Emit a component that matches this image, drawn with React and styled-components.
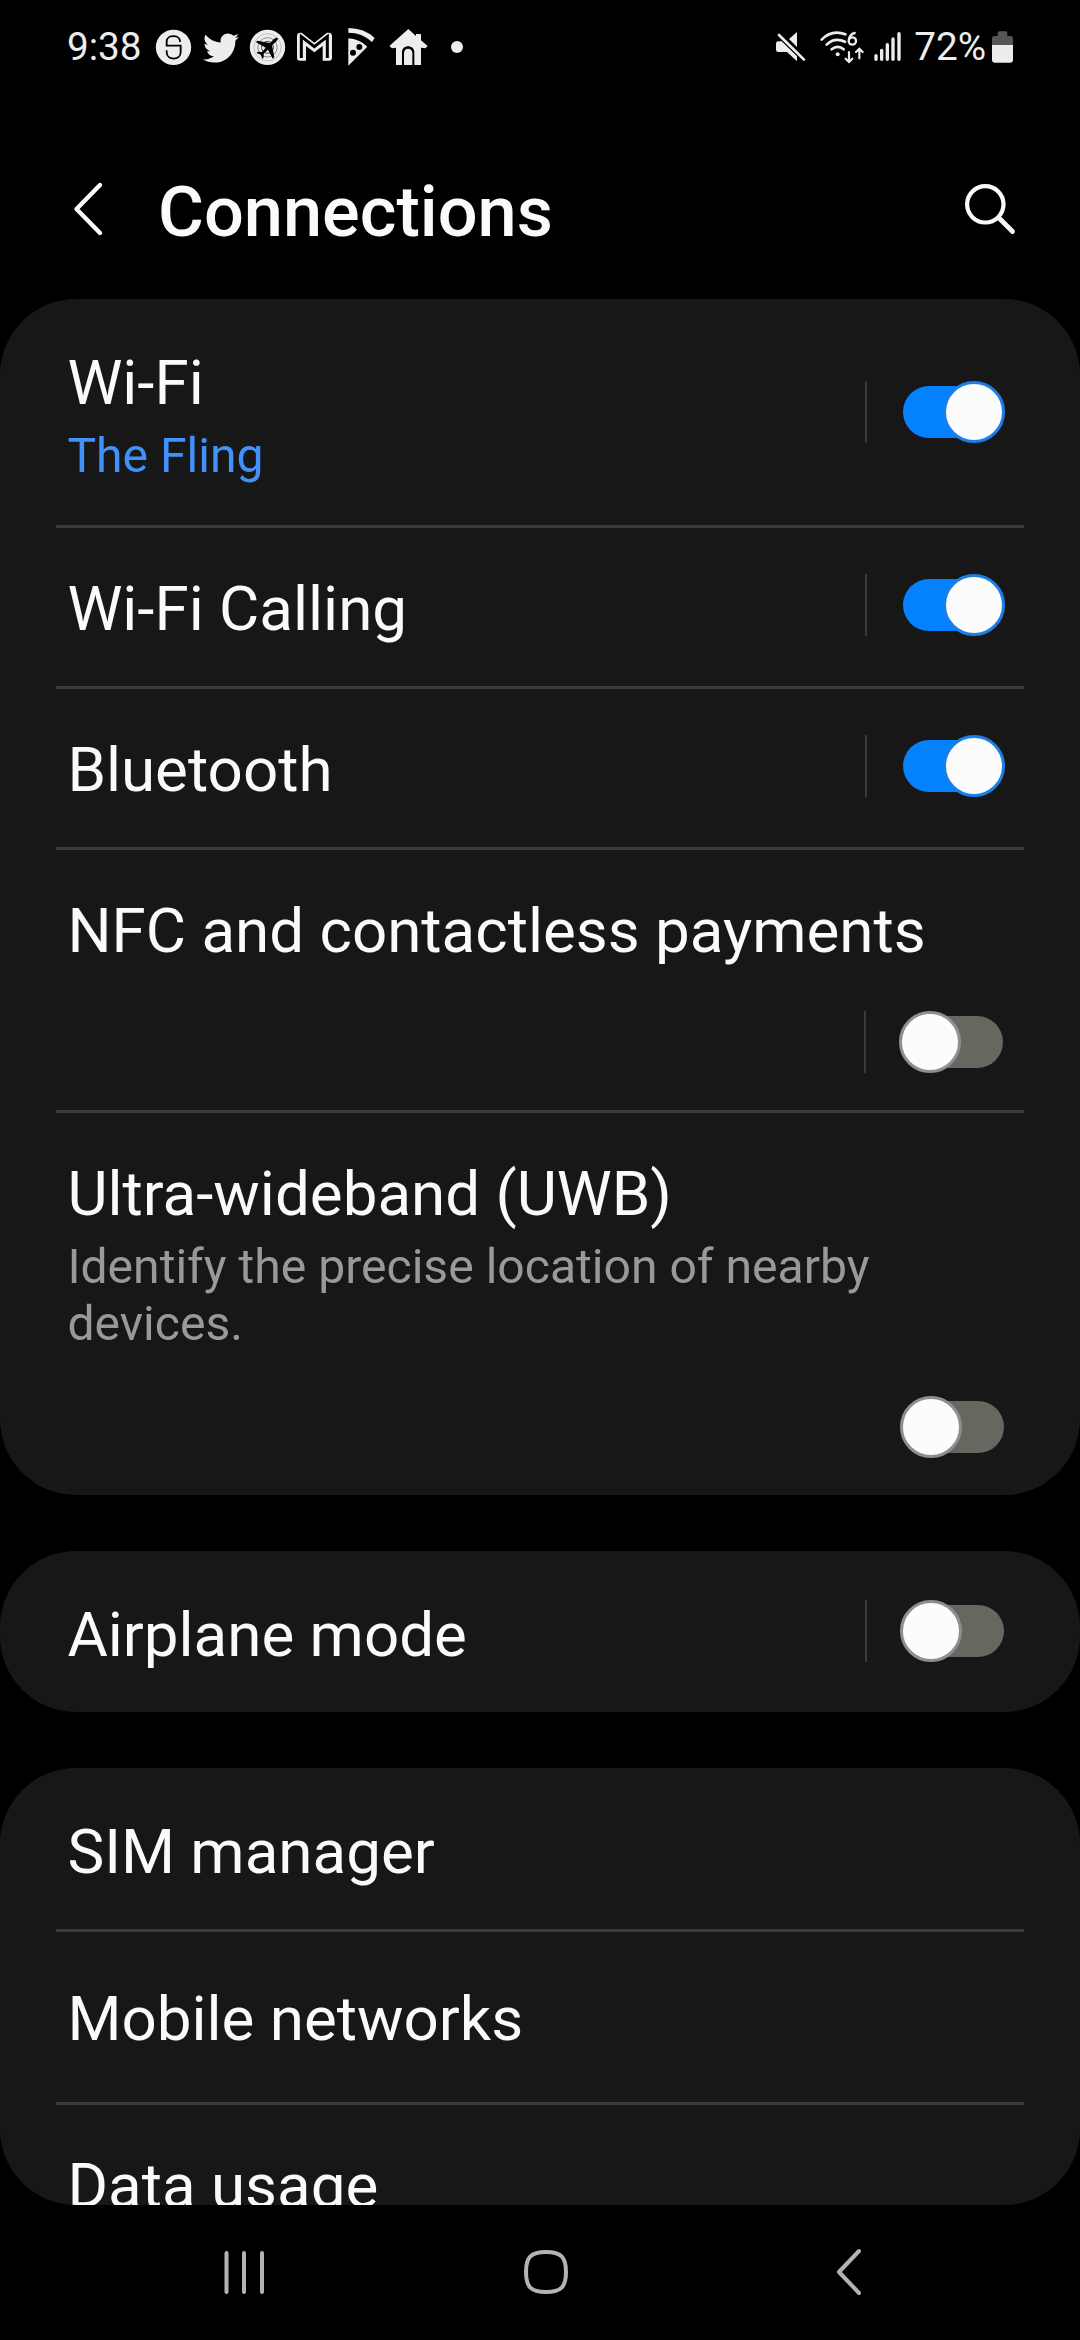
import React from "react";
import styled, { createGlobalStyle } from "styled-components";
import { FaTwitter } from "react-icons/fa";

const GlobalStyle = createGlobalStyle`
  * { box-sizing: border-box; }
  body { margin: 0; background: #000; }
`;

const Screen = styled.div`
  display: flex;
  flex-direction: column;
  width: 1080px;
  height: 2340px;
  overflow: hidden;
  background: #000;
  color: #fafafa;
  font-family: Roboto, "Liberation Sans", sans-serif;
`;

const StatusBar = styled.header`
  display: flex;
  justify-content: space-between;
  height: 96px;
  padding: 27px 66px 0 67px;
  color: #ededed;
`;

const StatusGroup = styled.div`
  display: flex;
  align-items: center;
  height: 40px;
`;

const StatusText = styled.span`
  width: ${(p) => p.$width}px;
  margin-left: ${(p) => p.$gap || 0}px;
  font-size: 38.7px;
  line-height: 40px;
  white-space: nowrap;
`;

const Glyph = styled.svg`
  flex: none;
  height: 40px;
  margin-left: ${(p) => p.$gap || 0}px;
`;

const Bird = styled(FaTwitter)`
  flex: none;
  width: 36px;
  height: 36px;
  margin: 1px 0 0 11px;
`;

const TitleBar = styled.div`
  display: flex;
  align-items: flex-start;
  height: 203px;
  padding: 84px 62px 0 71px;
`;

const Title = styled.h1`
  flex: 1;
  margin: -10px 0 0 52px;
  font-size: 70.3px;
  line-height: 84px;
  font-weight: 500;
`;

const Content = styled.main`
  display: flex;
  flex-direction: column;
  gap: 56px;
  height: 1906px;
  overflow: hidden;
`;

const Card = styled.section`
  flex: none;
  height: ${(p) => p.$height}px;
  overflow: hidden;
  border-radius: 76px;
  background: #171717;
`;

const Divider = styled.div`
  height: 3px;
  margin: 0 56px -3px;
  background: #3a3a3a;
`;

const Row = styled.div`
  display: flex;
  flex-direction: ${(p) => (p.$stacked ? "column" : "row")};
  align-items: ${(p) => (p.$stacked ? "stretch" : "center")};
  justify-content: space-between;
  height: ${(p) => p.$height}px;
  padding: 0 75px ${(p) => (p.$stacked ? 36 : 0)}px 67.4px;
`;

const Texts = styled.div`
  flex: 1;
  align-self: stretch;
  padding-top: ${(p) => p.$top || 48}px;
`;

const Label = styled.div`
  font-size: 61.9px;
  line-height: 73px;
  white-space: nowrap;
`;

const Detail = styled.div`
  max-width: 850px;
  margin-top: 7px;
  font-size: 48.1px;
  line-height: 57px;
  color: ${(p) => (p.$accent ? "#4291fa" : "#999999")};
`;

const Control = styled.div`
  display: flex;
  align-items: flex-start;
  justify-content: flex-end;
  gap: 33px;
  height: 63px;
  margin-right: ${(p) => (p.$inset ? 1 : 0)}px;
`;

const Separator = styled.div`
  width: 2px;
  height: 62px;
  background: #3a3a3a;
`;

const Switch = styled.div`
  position: relative;
  display: flex;
  align-items: center;
  width: 105px;
  height: 62px;
`;

const Track = styled.div`
  width: 101px;
  height: 52px;
  margin-left: 3px;
  border-radius: 26px;
  background: ${(p) => (p.$on ? "#0381fe" : "#66675f")};
`;

const Knob = styled.div`
  position: absolute;
  top: 0;
  left: ${(p) => (p.$on ? 43 : 0)}px;
  width: 62px;
  height: 62px;
  border-radius: 50%;
  border: 3px solid ${(p) => (p.$on ? "#1a7fe8" : "#8f8f8f")};
  background: #fcfcfc;
`;

const NavBar = styled.nav`
  display: flex;
  align-items: center;
  justify-content: space-between;
  height: 135px;
  padding: 0 216px 1px 222px;
`;

const NavHome = styled.svg`
  margin-left: -8px;
`;

const SealIcon = () => (
  <Glyph viewBox="315 36 111 120" width="37">
    <circle cx="370.5" cy="97" r="53" fill="currentColor" />
    <path
      d="M390 81V79C390 58 350 58 350 79V92H392V112C392 137 350 137 350 112V106"
      fill="none"
      stroke="#000"
      strokeWidth="5.5"
    />
  </Glyph>
);

const PlaneIcon = () => (
  <Glyph viewBox="597 36 111 120" width="37" $gap={10}>
    <circle cx="652.5" cy="97" r="53" fill="currentColor" />
    <circle cx="652.5" cy="97" r="41" fill="none" stroke="#aaa" strokeWidth="2" />
    <circle cx="652.5" cy="97" r="29" fill="none" stroke="#777" strokeWidth="2.5" />
    <circle cx="652.5" cy="97" r="18" fill="none" stroke="#444" strokeWidth="3" />
    <path
      d="M683 69C679 67 674 70 671 73L660 84L622 77L618 82L647 98L636 111L623 110L620 114L632 119L637 131L641 128L641 116L654 104L668 131L673 127L666 91L678 80C681 77 685 73 683 69Z"
      fill="#000"
    />
  </Glyph>
);

const MailIcon = () => (
  <Glyph viewBox="78 36 111 120" width="37" $gap={10}>
    <path
      d="M81 63Q81 53 91 53H95L133 83L171 53H176Q186 53 186 63V130Q186 137 179 137H158V93L133 112L108 93V137H88Q81 137 81 130Z"
      fill="currentColor"
    />
    <path
      d="M94 129V65L133 95L172 65V129"
      fill="none"
      stroke="#000"
      strokeWidth="9"
    />
  </Glyph>
);

const PizzaIcon = () => (
  <Glyph viewBox="228 36 90 120" width="30" $gap={13}>
    <path d="M235 39Q283 39 314 69L306 81Q277 53 235 53Z" fill="currentColor" />
    <path d="M235 70Q268 72 292 95L235 152Z" fill="currentColor" />
    <circle cx="268" cy="96" r="9" fill="#000" />
    <circle cx="249" cy="113" r="9" fill="#000" />
  </Glyph>
);

const HouseIcon = () => (
  <Glyph viewBox="354 36 123 120" width="41" $gap={12}>
    <path
      d="M415 42L438 63V57H453V76L473 93L466 100L453 98V150H433V112C433 88 396 88 396 112V150H378V98L366 100L358 93Z"
      fill="currentColor"
    />
    <path d="M402 150V114C402 97 427 97 427 114V150Z" fill="currentColor" />
  </Glyph>
);

const DotIcon = () => (
  <Glyph viewBox="540 36 42 120" width="14" $gap={21}>
    <circle cx="561" cy="96" r="18" fill="currentColor" />
  </Glyph>
);

const MuteIcon = () => (
  <Glyph viewBox="39 36 93 120" width="31">
    <path d="M105 51V96L81 72Z" fill="currentColor" />
    <path d="M49 79H59L105 124V139L75 111H49Q42 111 42 104V86Q42 79 49 79Z" fill="currentColor" />
    <path d="M51 60L126 134" stroke="currentColor" strokeWidth="8" strokeLinecap="round" />
  </Glyph>
);

const WifiIcon = () => (
  <Glyph viewBox="174 36 135 120" width="45" $gap={14}>
    <g fill="none" stroke="currentColor" strokeWidth="8" strokeLinecap="round">
      <path d="M179 74Q209 43 250 58" />
      <path d="M194 89Q217 66 249 80" />
      <path d="M209 103Q227 88 245 103" />
      <circle cx="271" cy="78" r="11" strokeWidth="7" />
      <path d="M261 74Q263 58 278 54" strokeWidth="7" />
      <path d="M261 111V139M251 131L261 141L271 131" strokeWidth="6.5" />
      <path d="M292 130V103M282 111L292 101L302 111" strokeWidth="6.5" />
    </g>
    <circle cx="227" cy="118" r="6" fill="currentColor" />
  </Glyph>
);

const SignalIcon = () => (
  <Glyph viewBox="333 36 87 120" width="29" $gap={8}>
    <path
      d="M342 122V133M359 106V133M376 89V133M393 72V133M411 56V133"
      stroke="currentColor"
      strokeWidth="10"
      strokeLinecap="round"
    />
  </Glyph>
);

const BatteryIcon = () => (
  <Glyph viewBox="693 36 69 120" width="23" $gap={5}>
    <path d="M696 91V70Q696 63 703 63H713V54Q713 49 718 49H737Q742 49 742 54V63H752Q759 63 759 70V91Z" fill="#555" />
    <path d="M696 90H759V134Q759 143 750 143H705Q696 143 696 134Z" fill="currentColor" />
  </Glyph>
);

const BackIcon = () => (
  <svg width="35" height="58" viewBox="0 0 35 58" fill="none">
    <path d="M29 5L5.500 29L29 53" stroke="#fafafa" strokeWidth="4.400" strokeLinecap="round" strokeLinejoin="round" />
  </svg>
);

const SearchIcon = () => (
  <svg width="56" height="58" viewBox="0 0 56 58" fill="none" stroke="#fafafa">
    <circle cx="23.300" cy="24.300" r="18.200" strokeWidth="4.200" />
    <path d="M37 38L50.500 51.500" strokeWidth="4.800" strokeLinecap="round" />
  </svg>
);

const RecentsIcon = () => (
  <svg width="44" height="48" viewBox="0 0 44 48" stroke="#b3b3b3" strokeWidth="4" strokeLinecap="round">
    <path d="M4.500 5V44M22 5V44M40 5V44" />
  </svg>
);

const HomeIcon = () => (
  <NavHome width="48" height="48" viewBox="0 0 48 48" fill="none" stroke="#b3b3b3" strokeWidth="4">
    <path d="M24 4C39 4 44 9 44 24S39 44 24 44S4 39 4 24S9 4 24 4Z" />
  </NavHome>
);

const NavBackIcon = () => (
  <svg width="30" height="48" viewBox="0 0 30 48" fill="none" stroke="#b3b3b3" strokeWidth="4">
    <path d="M25 3L5 24L25 45" strokeLinecap="round" strokeLinejoin="round" />
  </svg>
);

const cards = [
  {
    height: 1196,
    rows: [
      { label: "Wi-Fi", detail: "The Fling", accent: true, height: 226, on: true, separator: true },
      { label: "Wi-Fi Calling", height: 161, on: true, separator: true },
      { label: "Bluetooth", height: 161, on: true, separator: true },
      { label: "NFC and contactless payments", height: 263, on: false, separator: true, stacked: true, inset: true },
      {
        label: "Ultra-wideband (UWB)",
        detail: "Identify the precise location of nearby devices.",
        height: 385,
        on: false,
        stacked: true,
      },
    ],
  },
  { height: 161, rows: [{ label: "Airplane mode", height: 161, on: false, separator: true }] },
  {
    height: 437,
    rows: [
      { label: "SIM manager", height: 161 },
      { label: "Mobile networks", height: 173, top: 54 },
      { label: "Data usage", height: 161 },
    ],
  },
];

function SettingRow({ row }) {
  return (
    <Row $height={row.height} $stacked={row.stacked}>
      <Texts $top={row.top}>
        <Label>{row.label}</Label>
        {row.detail && <Detail $accent={row.accent}>{row.detail}</Detail>}
      </Texts>
      {row.on !== undefined && (
        <Control $inset={row.inset}>
          {row.separator && <Separator />}
          <Switch role="switch" aria-checked={row.on}>
            <Track $on={row.on} />
            <Knob $on={row.on} />
          </Switch>
        </Control>
      )}
    </Row>
  );
}

export default function App() {
  return (
    <>
      <GlobalStyle />
      <Screen>
        <StatusBar>
          <StatusGroup>
            <StatusText $width={88}>9:38</StatusText>
            <SealIcon />
            <Bird />
            <PlaneIcon />
            <MailIcon />
            <PizzaIcon />
            <HouseIcon />
            <DotIcon />
          </StatusGroup>
          <StatusGroup>
            <MuteIcon />
            <WifiIcon />
            <SignalIcon />
            <StatusText $gap={12}>72%</StatusText>
            <BatteryIcon />
          </StatusGroup>
        </StatusBar>
        <TitleBar>
          <BackIcon />
          <Title>Connections</Title>
          <SearchIcon />
        </TitleBar>
        <Content>
          {cards.map((card) => (
            <Card key={card.rows[0].label} $height={card.height}>
              {card.rows.map((row, i) => (
                <React.Fragment key={row.label}>
                  {i > 0 && <Divider />}
                  <SettingRow row={row} />
                </React.Fragment>
              ))}
            </Card>
          ))}
        </Content>
        <NavBar>
          <RecentsIcon />
          <HomeIcon />
          <NavBackIcon />
        </NavBar>
      </Screen>
    </>
  );
}
